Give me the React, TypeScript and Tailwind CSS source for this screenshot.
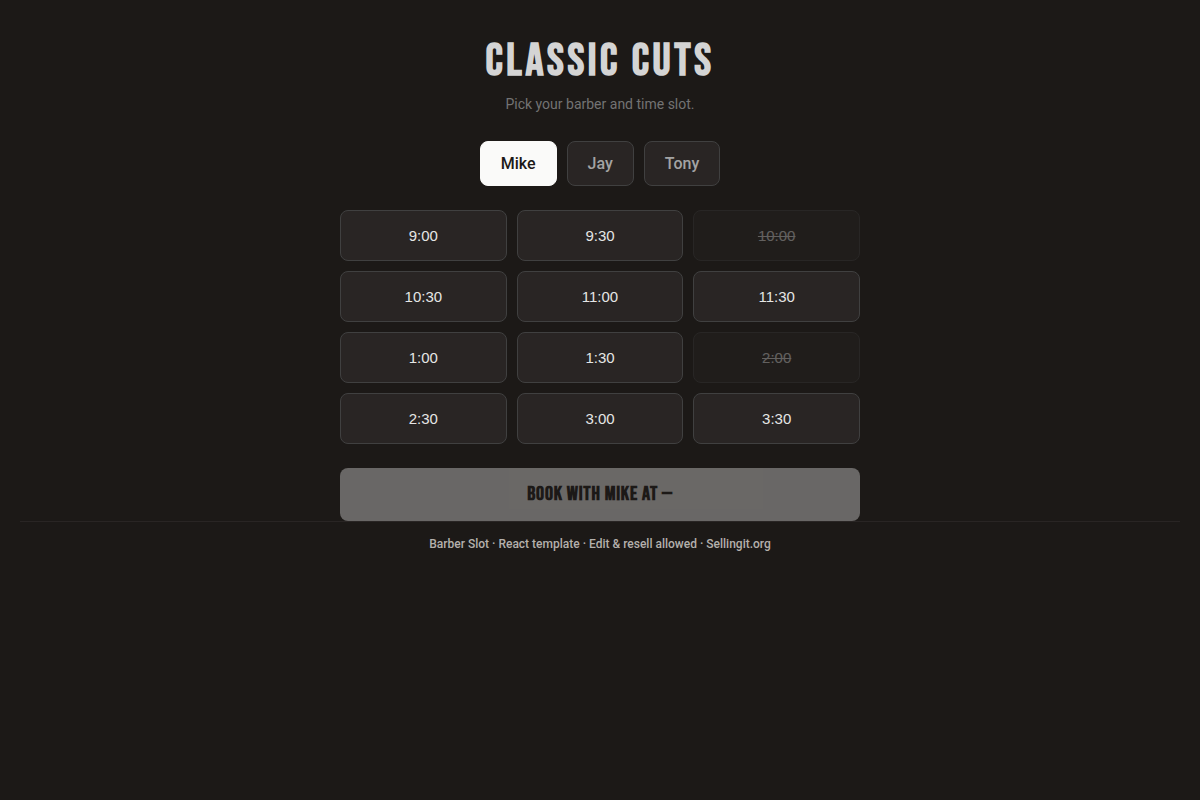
import React, { useState } from 'react';

const barbers = ['Mike', 'Jay', 'Tony'];

const slots = [
  '9:00', '9:30', '10:00',
  '10:30', '11:00', '11:30',
  '1:00', '1:30', '2:00',
  '2:30', '3:00', '3:30',
];

const taken = ['10:00', '2:00'];

const displayFont = "font-['Bebas_Neue',sans-serif]";

export default function App() {
  const [barber, setBarber] = useState('Mike');
  const [slot, setSlot] = useState<string | null>(null);

  return (
    <div className="min-h-screen bg-[#1c1917] px-5 pt-8 font-['Roboto',sans-serif] text-[#d4d4d4]">
      <main className="mx-auto max-w-[520px]">
        <header className="text-center">
          <h1 className={`${displayFont} text-[45px] leading-[60px] font-bold tracking-[0.08em] uppercase`}>
            Classic Cuts
          </h1>
          <p className="mt-0.5 text-sm text-[#737373]">Pick your barber and time slot.</p>
        </header>

        {/* Barbers */}
        <div className="mt-[27px] flex justify-center gap-2.5">
          {barbers.map((name) => (
            <button
              key={name}
              type="button"
              aria-pressed={name === barber}
              onClick={() => setBarber(name)}
              className={`rounded-lg border px-5 py-3 text-base leading-[19px] font-medium ${
                name === barber
                  ? 'border-[#fafaf9] bg-[#fafaf9] text-[#1c1917]'
                  : 'border-[#404040] bg-[#292524] text-[#a3a3a3]'
              }`}
            >
              {name}
            </button>
          ))}
        </div>

        {/* Time slots */}
        <div className="mt-6 grid grid-cols-3 gap-2.5">
          {slots.map((time) => (
            <button
              key={time}
              type="button"
              disabled={taken.includes(time)}
              onClick={() => setSlot(time)}
              className={`rounded-lg border px-4 py-4 font-['Liberation_Sans',sans-serif] text-[15px] leading-[17px] disabled:line-through disabled:opacity-35 ${
                time === slot
                  ? 'border-[#fafaf9] bg-[#fafaf9] text-[#1c1917]'
                  : 'border-[#404040] bg-[#292524] text-[#e5e5e5]'
              }`}
            >
              {time}
            </button>
          ))}
        </div>

        <button
          type="button"
          disabled={!slot}
          className={`${displayFont} mt-6 block w-full rounded-lg bg-[#fafaf9] p-4 text-xl leading-[21px] font-bold tracking-[0.04em] text-[#1c1917] uppercase disabled:opacity-35`}
        >
          Book with {barber} at {slot ?? '—'}
        </button>
      </main>

      <footer className="border-t border-[#292524] py-3.5 text-center text-xs leading-4 font-medium text-[#b4b0ac]">
        Barber Slot · React template · Edit &amp; resell allowed ·{' '}
        <a href="https://sellingit.org">Sellingit.org</a>
      </footer>
    </div>
  );
}
